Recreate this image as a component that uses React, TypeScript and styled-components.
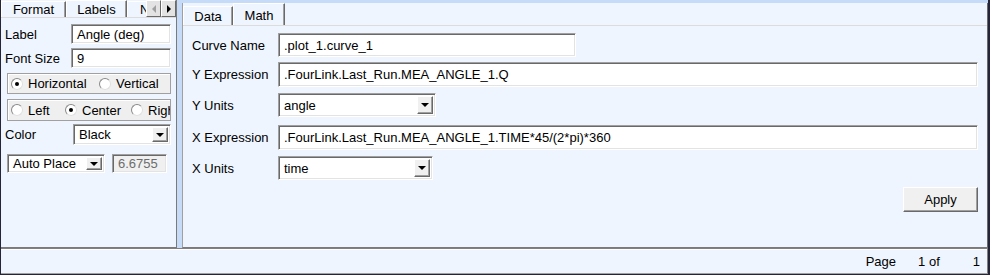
import styled, { createGlobalStyle } from 'styled-components';

const GlobalStyle = createGlobalStyle`
  html, body {
    margin: 0;
    padding: 0;
  }
  body {
    font-family: 'Liberation Sans', Arial, sans-serif;
    font-size: 13px;
    color: #000;
  }
`;

const PANEL = '#eef5fe';

const Window = styled.div`
  width: 990px;
  height: 275px;
  box-sizing: border-box;
  border-left: 1px solid #25253a;
  border-right: 2px solid #25253a;
  border-bottom: 1px solid #25253a;
  background: #c5dbf7;
  display: flex;
  flex-direction: column;
  overflow: hidden;
`;

const Main = styled.div`
  display: flex;
  height: 248px;
`;

const Splitter = styled.div`
  width: 5px;
  flex-shrink: 0;
`;

const LeftPanel = styled.div`
  width: 176px;
  box-sizing: border-box;
  flex-shrink: 0;
  background: ${PANEL};
  border-right: 1px solid #7a7a7a;
  border-bottom: 1px solid #7a7a7a;
  display: flex;
  flex-direction: column;
`;

const RightPanel = styled.div`
  width: 806px;
  margin-top: 3px;
  box-sizing: border-box;
  background: ${PANEL};
  border-left: 1px solid #a0a0a0;
  border-right: 1px solid #6a6a6a;
  border-bottom: 1px solid #7a7a7a;
  display: flex;
  flex-direction: column;
`;

/* ---------- tabs ---------- */

const TabStrip = styled.div<{ $h: number }>`
  display: flex;
  align-items: flex-end;
  height: ${(p) => p.$h}px;
  box-sizing: border-box;
  border-bottom: 1px solid #dcdcdc;
  flex-shrink: 0;
`;

const TabList = styled.div`
  display: flex;
  align-items: flex-end;
  height: 100%;
  flex: 1;
  overflow: hidden;
`;

const Tab = styled.div<{ $w: number; $active?: boolean; $h: number }>`
  width: ${(p) => p.$w}px;
  height: ${(p) => p.$h}px;
  flex-shrink: 0;
  box-sizing: border-box;
  background: ${PANEL};
  border-top: 1px solid #fff;
  border-left: 1px solid #fff;
  border-right: 1px solid #6a6a6a;
  box-shadow: inset -1px 0 0 #a0a0a0;
  margin-bottom: ${(p) => (p.$active ? '-1px' : '0')};
  position: relative;
  z-index: ${(p) => (p.$active ? 1 : 0)};
  display: flex;
  align-items: center;
  justify-content: ${(p) => (p.$active !== undefined ? 'center' : 'flex-start')};
  white-space: nowrap;
`;

const ClipTab = styled(Tab)`
  justify-content: flex-start;
  padding-left: 12px;
`;

const ScrollButtons = styled.div`
  display: flex;
  height: 17px;
  align-self: flex-start;
`;

const ScrollButton = styled.div`
  width: 15px;
  height: 17px;
  box-sizing: border-box;
  background: #e3e3e3;
  border: 1px solid;
  border-color: #fff #6a6a6a #6a6a6a #fff;
  display: flex;
  align-items: center;
  justify-content: center;
`;

const Arrow = styled.span<{ $dir: 'left' | 'right'; $disabled?: boolean }>`
  width: 0;
  height: 0;
  border-top: 4px solid transparent;
  border-bottom: 4px solid transparent;
  ${(p) =>
    p.$dir === 'left'
      ? `border-right: 4px solid ${p.$disabled ? '#a0a0a0' : '#000'};`
      : `border-left: 4px solid ${p.$disabled ? '#a0a0a0' : '#000'};`}
`;

/* ---------- controls ---------- */

const Row = styled.div<{ $mt: number; $h: number }>`
  display: flex;
  align-items: center;
  margin-top: ${(p) => p.$mt}px;
  height: ${(p) => p.$h}px;
  flex-shrink: 0;
`;

const FieldLabel = styled.div<{ $w: number }>`
  width: ${(p) => p.$w}px;
  flex-shrink: 0;
  white-space: nowrap;
`;

const TextBox = styled.div<{ $w?: number; $disabled?: boolean }>`
  ${(p) => (p.$w ? `width: ${p.$w}px; flex-shrink: 0;` : 'flex: 1;')}
  height: 100%;
  box-sizing: border-box;
  background: ${(p) => (p.$disabled ? '#f0f0f0' : '#fff')};
  color: ${(p) => (p.$disabled ? '#6d6d6d' : '#000')};
  border: 1px solid;
  border-color: #a0a0a0 #fff #fff #a0a0a0;
  box-shadow: inset 1px 1px 0 #696969, inset -1px -1px 0 #e3e3e3;
  display: flex;
  align-items: center;
  padding-left: 5px;
  white-space: nowrap;
  overflow: hidden;
`;

const SelectBox = styled(TextBox)`
  padding-right: 2px;
  justify-content: space-between;
`;

const DropButton = styled.div`
  width: 16px;
  height: calc(100% - 4px);
  box-sizing: border-box;
  background: #f0f0f0;
  border: 1px solid;
  border-color: #fff #696969 #696969 #fff;
  box-shadow: inset -1px -1px 0 #a0a0a0;
  display: flex;
  align-items: center;
  justify-content: center;
  flex-shrink: 0;
  &::after {
    content: '';
    border-left: 4px solid transparent;
    border-right: 4px solid transparent;
    border-top: 4px solid #000;
  }
`;

const RadioGroup = styled.div<{ $mt: number; $h: number }>`
  margin: ${(p) => p.$mt}px 0 0 2px;
  height: ${(p) => p.$h}px;
  box-sizing: border-box;
  background: #efefef;
  border: 1px solid #a0a0a0;
  box-shadow: inset 1px 1px 0 #fff;
  display: flex;
  align-items: center;
  padding-left: 3px;
  overflow: hidden;
  white-space: nowrap;
  flex-shrink: 0;
`;

const RadioItem = styled.div<{ $w: number }>`
  display: flex;
  align-items: center;
  gap: 5px;
  width: ${(p) => p.$w}px;
  flex-shrink: 0;
`;

const RadioDot = styled.span<{ $on?: boolean }>`
  width: 12px;
  height: 12px;
  box-sizing: border-box;
  border-radius: 50%;
  border: 1px solid;
  border-color: #8a8a8a #e0e0e0 #e0e0e0 #8a8a8a;
  background: #fff;
  display: inline-grid;
  place-items: center;
  flex-shrink: 0;
  &::after {
    content: '';
    width: 4px;
    height: 4px;
    border-radius: 50%;
    background: ${(p) => (p.$on ? '#000' : 'transparent')};
  }
`;

const LeftBody = styled.div`
  padding: 0 5px 0 4px;
  display: flex;
  flex-direction: column;
`;

const RightBody = styled.div`
  padding: 0 9px 0 9px;
  display: flex;
  flex-direction: column;
`;

const ApplyRow = styled.div`
  display: flex;
  justify-content: flex-end;
  margin-top: 7px;
  padding-right: 0;
`;

const Button = styled.div`
  width: 75px;
  height: 25px;
  box-sizing: border-box;
  background: #f0f0f0;
  border: 1px solid;
  border-color: #fff #696969 #696969 #fff;
  box-shadow: inset -1px -1px 0 #a0a0a0;
  display: flex;
  align-items: center;
  justify-content: center;
`;

const StatusBar = styled.div`
  height: 26px;
  box-sizing: border-box;
  background: ${PANEL};
  border-top: 1px solid #808080;
  border-bottom: 1px solid #a0a0a0;
  border-right: 1px solid #808080;
  box-shadow: inset 0 1px 0 #fff;
  display: flex;
  align-items: center;
  justify-content: flex-end;
  padding-right: 7px;
`;

const StatusCell = styled.span<{ $ml: number }>`
  margin-left: ${(p) => p.$ml}px;
`;

const Select = ({ value, w, disabled }: { value: string; w?: number; disabled?: boolean }) => (
  <SelectBox $w={w} $disabled={disabled}>
    <span>{value}</span>
    <DropButton />
  </SelectBox>
);

const Radio = ({ label, on, w }: { label: string; on?: boolean; w: number }) => (
  <RadioItem $w={w}>
    <RadioDot $on={on} />
    <span>{label}</span>
  </RadioItem>
);

const App = () => {
  return (
    <>
      <GlobalStyle />
      <Window>
        <Main>
          <LeftPanel>
            <TabStrip $h={18}>
              <TabList>
                <Tab $w={65} $h={16} $active={false}>Format</Tab>
                <Tab $w={61} $h={18} $active>Labels</Tab>
                <ClipTab $w={60} $h={16}>Numbers</ClipTab>
              </TabList>
              <ScrollButtons>
                <ScrollButton><Arrow $dir="left" $disabled /></ScrollButton>
                <ScrollButton><Arrow $dir="right" /></ScrollButton>
              </ScrollButtons>
            </TabStrip>
            <LeftBody>
              <Row $mt={6} $h={20}>
                <FieldLabel $w={66}>Label</FieldLabel>
                <TextBox $w={100}>Angle (deg)</TextBox>
              </Row>
              <Row $mt={4} $h={20}>
                <FieldLabel $w={66}>Font Size</FieldLabel>
                <TextBox $w={100}>9</TextBox>
              </Row>
              <RadioGroup $mt={5} $h={21}>
                <Radio label="Horizontal" on w={88} />
                <Radio label="Vertical" w={70} />
              </RadioGroup>
              <RadioGroup $mt={5} $h={22}>
                <Radio label="Left" w={54} />
                <Radio label="Center" on w={66} />
                <Radio label="Right" w={60} />
              </RadioGroup>
              <Row $mt={3} $h={21}>
                <FieldLabel $w={68}>Color</FieldLabel>
                <Select value="Black" w={98} />
              </Row>
              <Row $mt={9} $h={19}>
                <FieldLabel $w={2} />
                <Select value="Auto Place" w={98} />
                <FieldLabel $w={7} />
                <TextBox $w={55} $disabled>6.6755</TextBox>
              </Row>
            </LeftBody>
          </LeftPanel>
          <Splitter />
          <RightPanel>
            <TabStrip $h={23}>
              <TabList>
                <Tab $w={50} $h={19} $active={false}>Data</Tab>
                <Tab $w={52} $h={23} $active>Math</Tab>
              </TabList>
            </TabStrip>
            <RightBody>
              <Row $mt={7} $h={24}>
                <FieldLabel $w={86}>Curve Name</FieldLabel>
                <TextBox $w={298}>.plot_1.curve_1</TextBox>
              </Row>
              <Row $mt={5} $h={25}>
                <FieldLabel $w={86}>Y Expression</FieldLabel>
                <TextBox>.FourLink.Last_Run.MEA_ANGLE_1.Q</TextBox>
              </Row>
              <Row $mt={6} $h={24}>
                <FieldLabel $w={86}>Y Units</FieldLabel>
                <Select value="angle" w={158} />
              </Row>
              <Row $mt={8} $h={25}>
                <FieldLabel $w={86}>X Expression</FieldLabel>
                <TextBox>.FourLink.Last_Run.MEA_ANGLE_1.TIME*45/(2*pi)*360</TextBox>
              </Row>
              <Row $mt={6} $h={24}>
                <FieldLabel $w={86}>X Units</FieldLabel>
                <Select value="time" w={155} />
              </Row>
              <ApplyRow>
                <Button>Apply</Button>
              </ApplyRow>
            </RightBody>
          </RightPanel>
        </Main>
        <StatusBar>
          <StatusCell $ml={0}>Page</StatusCell>
          <StatusCell $ml={22}>1 of</StatusCell>
          <StatusCell $ml={33}>1</StatusCell>
        </StatusBar>
      </Window>
    </>
  );
};

export default App;
